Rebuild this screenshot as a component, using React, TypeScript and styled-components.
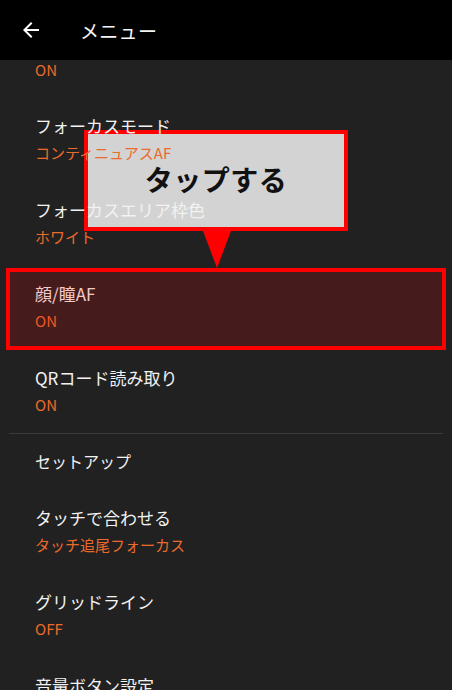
import React from "react";
import styled, { createGlobalStyle } from "styled-components";

const GlobalStyle = createGlobalStyle`
  html, body {
    margin: 0;
    padding: 0;
    background: #212121;
  }
  body {
    font-family: "Noto Sans CJK JP", "Noto Sans", Roboto, sans-serif;
  }
`;

const Screen = styled.div`
  position: relative;
  width: 452px;
  height: 690px;
  overflow: hidden;
  background: #212121;
`;

const Header = styled.header`
  position: relative;
  z-index: 3;
  height: 60px;
  background: #000;
  display: flex;
  align-items: center;
  padding-left: 19px;
  box-sizing: border-box;
`;

const BackButton = styled.button`
  border: none;
  background: transparent;
  padding: 0;
  width: 24px;
  height: 24px;
  display: flex;
  align-items: center;
  justify-content: center;
  color: #fff;
  cursor: pointer;
`;

const HeaderTitle = styled.h1`
  margin: 0 0 0 37px;
  font-size: 19px;
  font-weight: 400;
  color: #f4f4f4;
  letter-spacing: 0.3px;
`;

const Viewport = styled.div`
  position: relative;
  z-index: 1;
  height: 630px;
  overflow: hidden;
`;

const List = styled.div``;

/* bottom of the row scrolled under the header: only its value shows */
const TailRow = styled.div`
  height: 38px;
  padding: 1px 35px 0;
  box-sizing: border-box;
`;

const Row = styled.div<{ $highlight?: boolean }>`
  position: relative;
  height: 84px;
  padding: 18px 35px 0;
  box-sizing: border-box;
  display: flex;
  flex-direction: column;
  gap: 8px;

  ${({ $highlight }) =>
    $highlight &&
    `
    &::after {
      content: "";
      position: absolute;
      top: 2px;
      left: 6px;
      right: 6px;
      bottom: 0;
      border: 4px solid #ff0000;
      background: rgba(255, 0, 0, 0.17);
    }
  `}
`;

const Title = styled.div`
  font-size: 17px;
  line-height: 20px;
  color: #f2f2f2;
`;

const Value = styled.div`
  font-size: 15px;
  line-height: 18px;
  color: #ec6a2c;
`;

const Divider = styled.hr`
  margin: -1px 9px 0;
  border: none;
  height: 1px;
  background: #3a3a3a;
`;

const SectionHeader = styled.div`
  height: 56px;
  padding: 17px 35px 0;
  box-sizing: border-box;
  font-size: 16px;
  line-height: 20px;
  color: #f2f2f2;
`;

const Callout = styled.div`
  position: absolute;
  z-index: 0;
  top: 130px;
  left: 84px;
  width: 264px;
  height: 101px;
  box-sizing: border-box;
  border: 4px solid #ff0000;
  background: #d3d3d3;
  display: flex;
  align-items: center;
  justify-content: center;
  padding-bottom: 4px;

  &::after {
    content: "";
    position: absolute;
    top: 97px;
    left: 115px;
    border-left: 14px solid transparent;
    border-right: 14px solid transparent;
    border-top: 37px solid #ff0000;
  }
`;

const CalloutText = styled.span`
  font-size: 28px;
  font-weight: 700;
  color: #111;
  letter-spacing: 0.5px;
`;

type Item = { title: string; value: string; highlight?: boolean };

const before: Item[] = [
  { title: "フォーカスモード", value: "コンティニュアスAF" },
  { title: "フォーカスエリア枠色", value: "ホワイト" },
  { title: "顔/瞳AF", value: "ON", highlight: true },
  { title: "QRコード読み取り", value: "ON" },
];

const after: Item[] = [
  { title: "タッチで合わせる", value: "タッチ追尾フォーカス" },
  { title: "グリッドライン", value: "OFF" },
  { title: "音量ボタン設定", value: "シャッター" },
];

const SettingRow = ({ item }: { item: Item }) => (
  <Row $highlight={item.highlight}>
    <Title>{item.title}</Title>
    <Value>{item.value}</Value>
  </Row>
);

export default function App() {
  return (
    <Screen>
      <GlobalStyle />
      <Header>
        <BackButton aria-label="戻る">
          <svg width="24" height="24" viewBox="0 0 24 24" fill="currentColor">
            <path d="M20 11H7.83l5.59-5.59L12 4l-8 8 8 8 1.41-1.41L7.83 13H20v-2z" />
          </svg>
        </BackButton>
        <HeaderTitle>メニュー</HeaderTitle>
      </Header>
      <Callout>
        <CalloutText>タップする</CalloutText>
      </Callout>
      <Viewport>
        <List>
          <TailRow>
            <Value>ON</Value>
          </TailRow>
          {before.map((it) => (
            <SettingRow key={it.title} item={it} />
          ))}
          <Divider />
          <SectionHeader>セットアップ</SectionHeader>
          {after.map((it) => (
            <SettingRow key={it.title} item={it} />
          ))}
        </List>
      </Viewport>
    </Screen>
  );
}
